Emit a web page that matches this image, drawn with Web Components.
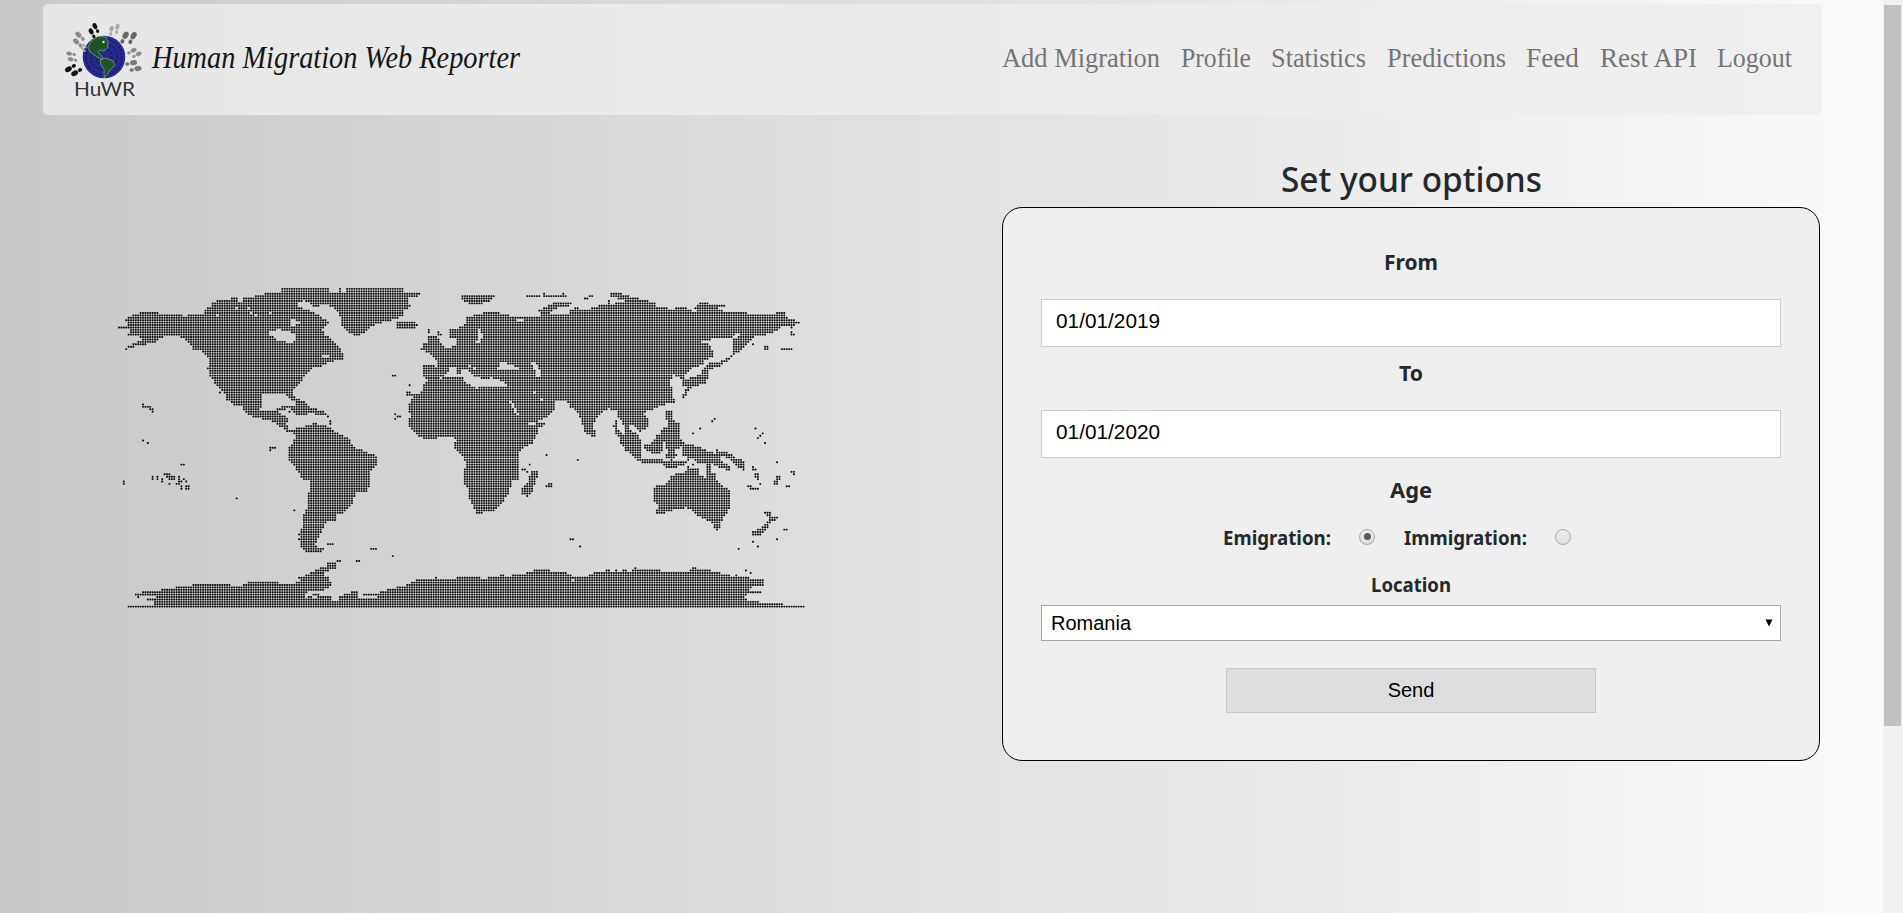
<!DOCTYPE html>
<html lang="en"><head><meta charset="utf-8"><title>Human Migration Web Reporter</title>
<style>html,body{margin:0;height:100%;overflow:hidden}body{font-family:"Noto Sans","Open Sans",sans-serif;color:#25292c}</style></head>
<body><huwr-app></huwr-app>
<script>
const define=(name,html,init)=>customElements.define(name,class extends HTMLElement{
  constructor(){super();this.attachShadow({mode:'open'}).innerHTML=html}
  connectedCallback(){if(init)init.call(this,this.shadowRoot)}
});

/* One line of text scaled horizontally to an exact width. */
define('fit-text','<style>:host{display:block;white-space:nowrap;overflow:visible}span{display:inline-block;transform-origin:0 50%}</style><span><slot></slot></span>',function(r){
  const w=+this.getAttribute('w'),s=r.querySelector('span');
  this.style.width=w+'px';
  s.style.transform='scaleX('+w/s.getBoundingClientRect().width+')';
});

define('huwr-logo',`<style>:host{display:block;width:80px;height:80px}svg{display:block;overflow:visible}text{font-family:Lato,sans-serif;font-size:19.5px;fill:#333}</style>
<svg width="80" height="80" viewBox="0 0 80 80">
<defs><g id="foot"><ellipse cx="0" cy="-2.3" rx="2.1" ry="3"/><ellipse cx=".4" cy="3" rx="1.5" ry="1.8"/></g>
<g id="pair"><use href="#foot" x="-2.7" y="1.5"/><use href="#foot" x="2.7" y="-1.5"/></g></defs>
<circle cx="40" cy="36" r="21.3" fill="#25278a"/>
<g fill="none" stroke="#15165c" stroke-width="1.3" stroke-dasharray="1.5 2"><circle cx="40" cy="36" r="18"/><circle cx="40" cy="36" r="13"/><circle cx="40" cy="36" r="8"/></g>
<g fill="none" stroke="#4547ab" stroke-width=".8" stroke-dasharray="1 2.6"><circle cx="40" cy="36" r="20"/><circle cx="40" cy="36" r="15.5"/><circle cx="40" cy="36" r="10.5"/></g>
<g fill="#1d5423" stroke="#9bb6ae" stroke-width=".6"><path d="M24 26 28 19 34 15.500 42 16 44 20 44 26 40 30 36 29 34 31 37 34 40 39 33 36 26 31z"/><path d="M36 39 42 37 49 40 51 44 46 49 43 54 40 57 40 48 37 44z"/></g>
<circle cx="39.500" cy="21" r="1.2" fill="#dce5e5"/>
<g fill="#8b8b8b"><use href="#pair" transform="translate(15 19) rotate(-42) scale(1.15)"/><use href="#pair" transform="translate(20 27) rotate(-42) scale(.6)" fill="#aaa"/><use href="#pair" transform="translate(8 36) rotate(-75) scale(.95)"/><use href="#pair" transform="translate(50 9) rotate(12)" fill="#aaa"/><use href="#pair" transform="translate(64 17) rotate(32) scale(1.3)" fill="#686868"/><use href="#pair" transform="translate(70 32) rotate(65)"/><use href="#pair" transform="translate(69 45) rotate(82) scale(1.2)" fill="#777"/></g>
<g fill="#101010"><use href="#pair" transform="translate(30 10) rotate(-25) scale(1.05)"/><use href="#pair" transform="translate(10 49) rotate(-118) scale(1.2)"/></g>
<text x="10" y="74.500" textLength="61" lengthAdjust="spacingAndGlyphs">HuWR</text></svg>`);

define('nav-link','<style>:host{display:block;font:28px/34px "Liberation Serif",serif;color:#757575}</style><slot></slot>');

define('site-header',`<style>:host{display:flex;box-sizing:border-box;width:1779px;height:111px;padding:0 30px 0 21px;background:rgba(238,238,238,.8);border-radius:5px}
.brand{display:flex;gap:8px;flex:1;padding-top:17px}.name{font:italic 31px/36px "Liberation Serif",serif;color:#161616;padding-top:19px}
nav{display:flex;padding-top:37px;gap:20.500px}</style>
<div class="brand"><huwr-logo></huwr-logo><fit-text class="name" w="368">Human Migration Web Reporter</fit-text></div>
<nav><nav-link><fit-text w="158">Add Migration</fit-text></nav-link><nav-link><fit-text w="70">Profile</fit-text></nav-link><nav-link><fit-text w="95">Statistics</fit-text></nav-link><nav-link><fit-text w="119">Predictions</fit-text></nav-link><nav-link><fit-text w="53">Feed</fit-text></nav-link><nav-link><fit-text w="97">Rest API</fit-text></nav-link><nav-link><fit-text w="75">Logout</fit-text></nav-link></nav>`);

/* World map: outlines sampled onto a grid of dots. Coordinates are thirds of a pixel;
   each sheet has its own origin. */
const sheets=[
{o:[0,0],land:[
'48,118 70,105 95,97 148,97 150,103 215,103 222,110 240,104 282,102 284,88 300,80 308,68 330,60 360,60 362,53 382,53 384,67 398,67 402,53 428,53 432,46 460,46 468,38 512,38 516,24 660,24 660,36 686,36 688,24 694,24 695,36 708,36 710,24 882,24 882,38 932,39 928,46 915,52 898,54 896,70 900,80 882,90 880,108 860,116 836,122 806,130 785,138 772,145 766,160 740,168 715,160 700,145 692,130 690,110 680,92 670,84 655,76 610,78 600,70 584,60 578,66 560,72 566,82 600,92 620,100 634,110 650,122 658,128 650,138 638,144 640,160 660,176 676,190 690,205 692,218 702,220 702,240 680,240 665,246 640,254 632,264 615,258 600,270 588,282 577,292 574,306 556,322 545,333 550,345 532,352 528,338 470,338 452,345 458,370 448,390 480,394 500,388 520,380 512,392 505,400 525,408 535,418 530,435 540,450 580,440 610,430 650,435 670,455 545,460 520,448 500,430 475,420 430,412 405,398 395,380 370,376 350,358 340,335 318,314 302,292 293,265 298,240 285,225 270,212 250,210 240,194 225,180 210,168 170,168 150,175 135,190 120,188 95,197 65,202 50,210 46,204 60,194 100,180 90,172 54,166 62,150 28,147 24,140 48,142 50,128',
'530,340 548,348 565,355 585,368 600,384 640,392 657,405 664,430 655,434 655,415 640,403 600,402 558,404 540,387 508,390 520,374 560,374 550,362 532,352','853,130 870,125 915,126 923,135 912,144 863,144'],
cut:['472,162 486,152 505,147 525,152 550,158 557,170 552,185 543,195 530,185 505,180 490,172','543,118 556,118 560,126 572,126 572,132 555,136 543,136','638,226 659,226 659,234 638,234'],
hole:'324,107 380,86 416,86 420,98 426,98 438,107 482,98',
dot:'332,338 540,396 850,288 857,288 900,316 855,403 855,415 862,410 870,410 100,375 100,381 108,381 116,382 123,382 123,390 129,390 129,396 100,482 115,490'},
{o:[870,0],land:[
'68,256 110,258 114,247 98,232 88,218 76,214 63,208 72,192 85,190 85,170 112,170 120,190 140,203 165,197 170,175 150,172 150,149 175,146 195,130 200,112 230,104 260,97 290,97 320,105 350,112 375,112 415,112 420,104 416,92 435,82 460,70 515,68 512,76 480,82 455,88 452,104 490,104 505,106 510,92 525,84 570,86 600,76 625,74 625,60 632,60 632,72 660,68 680,62 650,55 630,48 634,39 660,39 685,48 720,56 768,70 768,80 805,82 810,92 825,84 852,82 885,96 1025,96 1060,104 1125,104 1130,97 1157,97 1157,110 1180,120 1199,126 1196,134 1160,139 1135,144 1135,153 1100,164 1060,172 1045,192 1030,204 1015,218 998,227 998,178 935,178 908,184 905,190 922,190 935,205 940,232 915,240 905,255 880,262 855,283 850,300 838,302 835,290 822,286 810,300 806,312 818,325 815,345 825,366 812,370 800,372 780,378 755,392 728,398 745,412 747,437 730,452 715,455 708,440 690,434 690,456 676,440 655,410 650,395 625,384 605,400 585,415 582,440 588,470 574,470 556,458 545,430 535,398 510,380 500,364 465,364 462,387 448,405 425,418 410,429 437,429 437,435 415,447 408,472 395,492 370,505 356,520 357,600 335,605 328,642 312,655 310,667 285,693 248,698 230,701 220,682 207,657 205,625 193,612 193,570 200,550 182,520 165,507 163,485 170,480 155,472 75,477 55,467 26,437 30,405 26,373 42,348 20,347 20,336 60,340 70,320 75,302 92,300 70,292',
'860,297 900,282 912,262 935,246 950,247 985,232 1000,224 1000,233 975,247 950,264 928,266 928,290 915,310 880,320 865,332 857,352 842,354 858,322 845,312 850,298','184,45 286,45 277,62 230,74 205,72 188,60','883,82 900,69 925,69 930,75 977,75 977,82 950,84 970,90 968,96 890,96','380,45 421,45 421,52 380,52','429,45 500,45 500,52 429,52','1143,204 1178,204 1178,211 1143,211','798,390 815,390 820,420 838,430 842,480 838,492 795,490 795,480 808,465 790,455 800,445 805,430 798,420','845,487 860,492 890,498 920,510 845,510'],
cut:['135,285 150,265 170,262 172,280 190,285 195,293 150,290 135,294','183,270 200,270 225,288 250,296 300,300 322,312 320,320 240,318 230,326 210,315 192,307','293,268 300,250 318,250 330,256 350,260 357,268','395,248 408,250 420,270 424,292 410,292 405,270','230,150 240,148 248,165 242,188 228,188 238,170','385,429 410,429 410,435 385,435','352,116 372,116 372,124 352,124','1000,172 1008,160 1022,166 1008,174'],
hole:'332,367 340,374 340,381 347,388 347,396 353,402 405,338 426,360 124,295 210,258 224,266 275,293',
dot:'432,42 490,42 556,56 562,56 570,49 577,49 1097,201 1103,201 1097,208 1103,208 1060,194 1175,142 1175,158 1182,164 1175,164 87,152 87,158 116,156 120,163 116,163 30,316 944,418 937,425 901,446 880,461 1067,446 1088,461 1081,468 1074,475 1096,490 648,425 648,432 641,438 648,440 648,453 648,461 655,461'},
{o:[0,450],land:['520,-4 540,8 557,12 552,30 540,48 535,65 537,95 552,108 566,130 582,150 600,155 596,185 594,230 586,240 580,255 578,285 572,300 572,350 592,367 636,367 643,357 625,350 613,342 620,335 630,315 645,285 655,274 675,272 682,255 700,248 730,215 735,190 770,184 780,165 780,128 802,107 804,80 775,68 740,55 722,40 715,20 690,14 668,2 650,-15 610,-20 580,-10 548,0',
'54,526 132,526 128,512 112,508 140,505 140,498 112,498 78,503 75,491 105,485 150,480 205,470 275,462 363,462 368,468 398,468 412,456 475,456 479,461 480,455 506,455 512,461 550,462 570,452 566,441 590,434 610,422 650,408 653,396 682,396 682,412 655,424 640,432 658,434 664,470 640,482 600,482 583,498 590,502 610,490 664,500 662,510 685,512 690,498 710,488 740,484 748,508 756,508 760,503 802,503 802,497 756,496 760,491 800,491 830,480 880,468 925,447 975,447 976,440 984,447 1035,446 1040,440 1080,442 1080,535 54,535'],
cut:['645,430 655,430 655,441 645,441','610,494 618,494 618,502 610,502'],
dot:'482,55 490,55 497,55 482,62 216,105 223,105 129,141 129,148 144,141 144,148 158,148 158,154 165,134 172,134 180,134 172,141 180,141 187,141 194,141 187,148 194,148 180,148 180,162 208,141 208,148 208,155 208,162 201,162 216,155 223,148 230,155 216,170 216,177 230,170 237,170 230,177 237,177 42,154 42,161 381,205 553,241 568,314 568,328 655,343 662,343 669,343 785,357 792,357 799,357 849,379 684,393 691,393 741,393 748,393'},
{o:[870,450],land:['208,534 208,440 240,441 250,446 270,442 310,434 325,440 345,434 380,428 410,419 450,419 455,426 500,428 520,440 560,438 580,428 615,424 620,419 630,419 640,427 648,419 655,426 672,420 690,424 704,412 712,420 782,420 784,426 845,424 865,425 880,412 890,412 892,420 930,420 935,427 960,428 962,434 1000,437 1010,432 1014,440 1045,442 1047,448 1092,448 1088,466 1060,468 1048,478 1050,484 1085,484 1082,492 1040,494 1035,505 1042,512 1076,512 1080,519 1149,519 1152,526 1215,526 1215,535',
'645,-28 652,-28 652,-5 675,15 672,-22 690,0 712,10 722,34 722,68 728,84 760,88 840,92 865,92 850,106 835,104 830,112 800,112 790,104 725,100 705,84 678,62 660,37 662,24 648,10','733,42 760,38 770,18 785,5 788,-15 806,0 798,25 790,45 785,68 765,72 735,60','795,43 830,45 842,28 852,45 825,60 830,75 815,90 798,82 802,60','845,50 880,50 920,62 960,75 965,92 985,105 995,122 985,122 960,112 930,98 890,98 870,82 850,75','948,66 985,68 1005,82 1030,92 1038,120 1020,118 1000,98 985,88 960,76','762,170 800,160 812,140 830,130 855,128 862,110 895,115 898,135 918,145 918,100 933,100 935,130 945,130 950,150 985,180 992,190 990,237 972,262 962,275 962,292 952,302 940,296 935,275 905,265 880,245 858,230 850,238 802,243 798,252 770,250 772,225 762,215','1056,304 1085,290 1105,270 1105,258 1092,253 1092,246 1112,246 1114,255 1133,262 1130,272 1118,274 1105,290 1085,316 1058,318','1060,130 1078,130 1076,155 1062,140','1042,160 1050,168 1078,172 1078,180 1045,176','1120,163 1128,140 1142,140 1136,156 1132,165','366,172 384,158 388,138 400,118 415,122 410,148 400,172 400,187 384,202 366,190'],
cut:[],hole:'519,451',dot:'440,76 534,90 390,104 368,119 375,119 382,126 440,169 447,169 454,169 447,162 454,162 512,328 519,328 541,350 1016,357 1060,335 1074,350 1132,328 1154,299 1160,299 1132,97 1175,126 1182,126 1182,133 1160,170 1167,170 1038,422 1052,429 1081,162 1067,119 1060,112 1060,119 952,61 880,105 862,82 862,90 110,443 720,2 800,14 810,14'}];
define('dot-map','<style>:host{display:block;width:700px;height:330px}svg{display:block}</style><svg width="700" height="330"><path fill="#0c0c0c"/></svg>',function(r){
  const px=2.4018,py=2.4072,x0=236.67-110-50*px,y0=326.67-132*py,on=new Set();
  const nums=s=>s?s.trim().split(/[ ,]+/).map(Number):[];
  const cell=(x,y)=>Math.round((x/3-x0)/px)+','+Math.round((y/3-y0)/py);
  const fill=(s,o,add)=>{
    const n=nums(s),p=[];for(let i=0;i<n.length;i+=2)p.push([(n[i]+o[0])/3,(n[i+1]+o[1])/3]);
    for(let j=0;j<=132;j++){const y=y0+j*py,c=[];
      for(let i=0;i<p.length;i++){const a=p[i],b=p[(i+1)%p.length];if((a[1]>y)!==(b[1]>y))c.push(a[0]+(y-a[1])*(b[0]-a[0])/(b[1]-a[1]))}
      c.sort((a,b)=>a-b);
      for(let k=0;k+1<c.length;k+=2)for(let i=Math.ceil((c[k]-x0)/px);x0+i*px<=c[k+1];i++)add?on.add(i+','+j):on.delete(i+','+j)}
  };
  const pts=(s,o,f)=>{const n=nums(s);for(let i=0;i<n.length;i+=2)f(cell(n[i]+o[0],n[i+1]+o[1]))};
  for(const s of sheets)s.land.forEach(p=>fill(p,s.o,true));
  for(const s of sheets){s.cut.forEach(p=>fill(p,s.o,false));pts(s.hole,s.o,k=>on.delete(k));pts(s.dot,s.o,k=>on.add(k))}
  let d='';for(const k of on){const[i,j]=k.split(',');d+=`M${(x0+i*px-.45).toFixed(2)} ${(y0+j*py-.95).toFixed(2)}h.9l.5 .5v.9l-.5.5h-.9l-.5-.5v-.9z`}
  r.querySelector('path').setAttribute('d',d);
});

define('text-field','<style>:host{display:block}input{display:block;box-sizing:border-box;width:100%;height:48px;padding:0 14px 4px;margin:0;border:1px solid #ccc;border-radius:0;background:#fff;font:20.800px "Liberation Sans",sans-serif;color:#000;outline:0}</style><input type="text">',function(r){r.querySelector('input').value=this.getAttribute('value')});
define('radio-dot','<style>:host{display:block;box-sizing:border-box;width:16px;height:16px;border:1px solid #aaa;border-radius:50%;background:linear-gradient(#eee,#ddd);padding:3.500px}i{display:block;width:7px;height:7px;border-radius:50%}:host([checked]) i{background:#5b5b5b}</style><i></i>');
define('country-select',`<style>:host{display:grid;height:36px}select,svg{grid-area:1/1}select{appearance:none;width:100%;height:36px;border:1px solid #a9a9a9;border-radius:0;background:#fff;padding:0 9px 1px;margin:0;font:20px "Liberation Sans",sans-serif;color:#000}svg{place-self:center end;margin-right:8px;pointer-events:none}</style>
<select><option>Romania</option></select><svg width="8" height="8"><path d="M.5.5h7L4 7.500z"/></svg>`);
define('send-button','<style>:host{display:flex}button{flex:1;height:45px;padding:0;border:1px solid #c8c8c8;background:#ddd;font:20px "Liberation Sans",sans-serif;color:#000}</style><button><slot></slot></button>');

define('options-form',`<style>:host{display:block;width:818px}h1{margin:0;height:53px;display:flex;justify-content:center;font:500 35px/50px "Noto Sans",sans-serif}
.card{box-sizing:border-box;height:554px;border:1px solid #000;border-radius:20px;background:#efefef;padding:38px 38px 0;display:flex;flex-direction:column;font-weight:700}
.l{display:flex;justify-content:center;font-size:21.500px;line-height:32px}.s{font-size:19px;line-height:28px}
.r{display:flex;height:28px;padding-left:182px;align-items:center;margin-top:18px}send-button{width:370px;align-self:center;margin-top:27px}</style>
<h1><fit-text w="261">Set your options</fit-text></h1>
<div class="card"><div class="l"><fit-text w="54">From</fit-text></div><text-field value="01/01/2019" style="margin-top:21px"></text-field>
<div class="l" style="margin-top:10px"><fit-text w="24">To</fit-text></div><text-field value="01/01/2020" style="margin-top:21px"></text-field>
<div class="l" style="margin-top:16px"><fit-text w="42">Age</fit-text></div>
<div class="r s"><fit-text w="108">Emigration:</fit-text><radio-dot checked style="margin:-3px 0 0 28px"></radio-dot><fit-text w="123" style="margin-left:29px">Immigration:</fit-text><radio-dot style="margin:-3px 0 0 28px"></radio-dot></div>
<div class="l s" style="margin-top:19px"><fit-text w="80">Location</fit-text></div><country-select style="margin-top:6px"></country-select><send-button>Send</send-button></div>`);

define('page-scrollbar','<style>:host{display:block;box-sizing:border-box;width:20px;height:913px;background:#f1f1f1;padding:5px 2px 0 1px}i{display:block;height:721px;background:#c1c1c1}</style><i></i>');
define('huwr-app',`<style>:host{display:flex;height:913px;overflow:hidden}.page{width:1883px;box-sizing:border-box;padding:4px 0 0 43px;background:linear-gradient(90deg,#c8c8c8,#fafafa)}
main{display:flex;justify-content:space-between;width:1777px}dot-map{margin:165px 0 0 67px}options-form{margin-top:39px}</style>
<div class="page"><site-header></site-header><main><dot-map></dot-map><options-form></options-form></main></div><page-scrollbar></page-scrollbar>`);
</script></body></html>
